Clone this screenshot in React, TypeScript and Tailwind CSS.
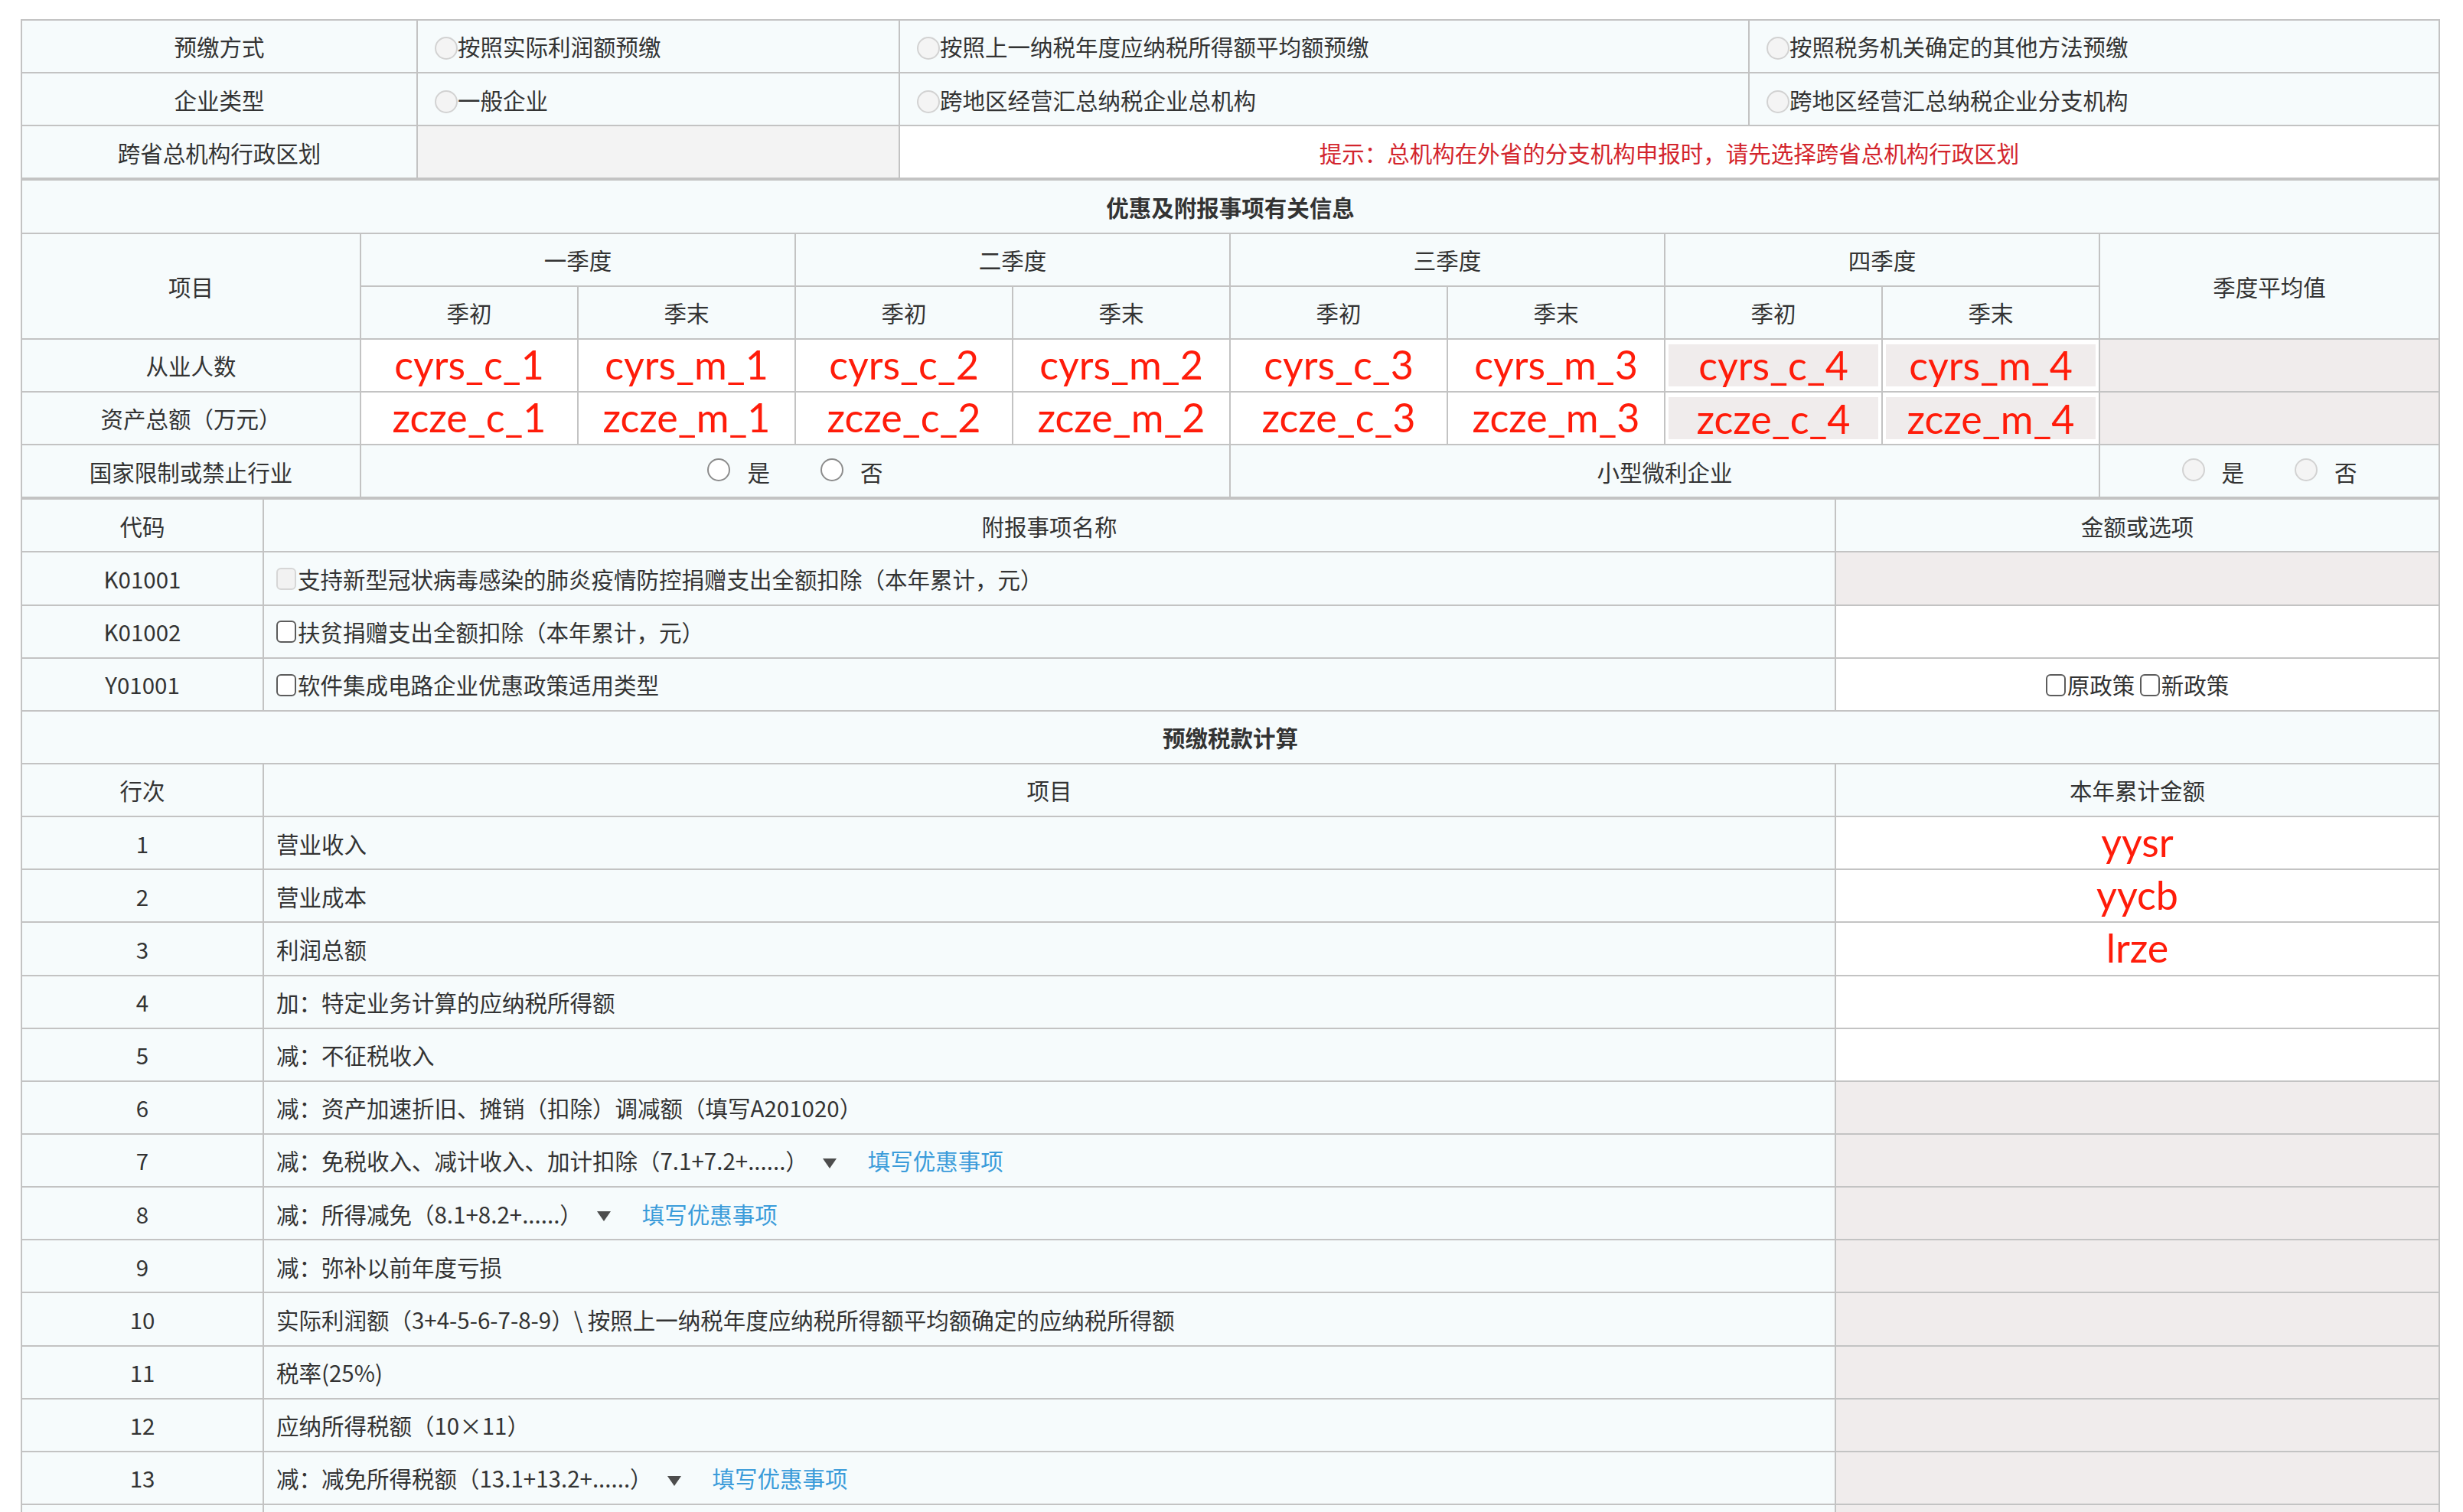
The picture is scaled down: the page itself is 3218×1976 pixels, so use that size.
import React from "react";

// shared cell styles
const base = "border-2 border-[#c3c3c3] h-[69.15px] p-0 text-[29.5px] font-['Noto_Sans_CJK_SC',sans-serif]";
const labelCell = `${base} bg-[#f6fbfc] text-center text-[#333]`;
const leftCell = `${base} bg-[#f6fbfc] text-left pl-[16px] text-[#333]`;
const whiteCell = `${base} bg-white text-center text-[#333]`;
const lockedCell = `${base} bg-[#f0ecec]`;
const valueText = "font-['Lato',sans-serif] text-[52px] text-[#ff1c0a] leading-none";

function Radio({ dark = false }: { dark?: boolean }) {
  return (
    <span
      className={`inline-block w-[30px] h-[30px] rounded-full border-2 align-middle -mt-[4px] ${
        dark ? "border-[#8c8c8c] bg-white" : "border-[#d2d2d2] bg-[#f4f4f4]"
      }`}
    />
  );
}

function Checkbox({ disabled = false }: { disabled?: boolean }) {
  return (
    <span
      className={`inline-block w-[26px] h-[29px] rounded-[6px] border-2 align-middle -mt-[8px] mr-[2px] ${
        disabled ? "border-[#d6d6d6] bg-[#f2f2f2]" : "border-[#5c5c5c] bg-white"
      }`}
    />
  );
}

function Caret() {
  return (
    <svg className="inline-block align-middle ml-[18px] -mt-[2px]" width="20" height="15" viewBox="0 0 20 15">
      <path d="M1 1h18L10 14z" fill="#4d4d4d" />
    </svg>
  );
}

function YesNo({ dark = false }: { dark?: boolean }) {
  return (
    <div className="flex items-center justify-center gap-[66px]">
      <span className="flex items-center gap-[22px]">
        <Radio dark={dark} />
        <span>是</span>
      </span>
      <span className="flex items-center gap-[22px]">
        <Radio dark={dark} />
        <span>否</span>
      </span>
    </div>
  );
}

const quarters = ["一季度", "二季度", "三季度", "四季度"];

const quarterCols = [1, 2, 3, 4];

const attachRows = [
  { code: "K01001", name: "支持新型冠状病毒感染的肺炎疫情防控捐赠支出全额扣除（本年累计，元）", disabled: true, locked: true },
  { code: "K01002", name: "扶贫捐赠支出全额扣除（本年累计，元）", disabled: false, locked: false },
  { code: "Y01001", name: "软件集成电路企业优惠政策适用类型", disabled: false, locked: false, policy: true },
];

type TaxRow = {
  n: number;
  text: string;
  value?: string;
  locked?: boolean;
  link?: boolean;
};

const taxRows: TaxRow[] = [
  { n: 1, text: "营业收入", value: "yysr" },
  { n: 2, text: "营业成本", value: "yycb" },
  { n: 3, text: "利润总额", value: "lrze" },
  { n: 4, text: "加：特定业务计算的应纳税所得额" },
  { n: 5, text: "减：不征税收入" },
  { n: 6, text: "减：资产加速折旧、摊销（扣除）调减额（填写A201020）", locked: true },
  { n: 7, text: "减：免税收入、减计收入、加计扣除（7.1+7.2+......）", locked: true, link: true },
  { n: 8, text: "减：所得减免（8.1+8.2+......）", locked: true, link: true },
  { n: 9, text: "减：弥补以前年度亏损", locked: true },
  { n: 10, text: "实际利润额（3+4-5-6-7-8-9）\\ 按照上一纳税年度应纳税所得额平均额确定的应纳税所得额", locked: true },
  { n: 11, text: "税率(25%)", locked: true },
  { n: 12, text: "应纳所得税额（10×11）", locked: true },
  { n: 13, text: "减：减免所得税额（13.1+13.2+......）", locked: true, link: true },
];

export default function App() {
  return (
    <div className="min-h-screen bg-white pl-[27px] pt-[25px] flex flex-col">
      {/* 预缴方式 / 企业类型 */}
      <table className="w-[3159px] table-fixed border-collapse border-2 border-[#c3c3c3]">
        <colgroup>
          <col className="w-[517px]" />
          <col className="w-[630px]" />
          <col className="w-[1110px]" />
          <col className="w-[902px]" />
        </colgroup>
        <tbody>
          <tr>
            <td className={labelCell}>预缴方式</td>
            <td className={`${leftCell} pl-[22px]`}>
              <Radio />按照实际利润额预缴
            </td>
            <td className={`${leftCell} pl-[22px]`}>
              <Radio />按照上一纳税年度应纳税所得额平均额预缴
            </td>
            <td className={`${leftCell} pl-[22px]`}>
              <Radio />按照税务机关确定的其他方法预缴
            </td>
          </tr>
          <tr>
            <td className={labelCell}>企业类型</td>
            <td className={`${leftCell} pl-[22px]`}>
              <Radio />一般企业
            </td>
            <td className={`${leftCell} pl-[22px]`}>
              <Radio />跨地区经营汇总纳税企业总机构
            </td>
            <td className={`${leftCell} pl-[22px]`}>
              <Radio />跨地区经营汇总纳税企业分支机构
            </td>
          </tr>
          <tr>
            <td className={labelCell}>跨省总机构行政区划</td>
            <td className={`${base} bg-[#f3f3f3]`} />
            <td colSpan={2} className={`${base} bg-white text-center text-[#d3252d]`}>
              提示：总机构在外省的分支机构申报时，请先选择跨省总机构行政区划
            </td>
          </tr>
        </tbody>
      </table>

      {/* 优惠及附报事项有关信息 */}
      <table className="w-[3159px] table-fixed border-collapse border-2 border-[#c3c3c3]">
        <colgroup>
          <col className="w-[443px]" />
          {[0, 1, 2, 3, 4, 5, 6, 7].map((i) => (
            <col key={i} className="w-[284px]" />
          ))}
          <col className="w-[444px]" />
        </colgroup>
        <tbody>
          <tr>
            <td colSpan={10} className={`${labelCell} font-bold`}>
              优惠及附报事项有关信息
            </td>
          </tr>
          <tr>
            <td rowSpan={2} className={labelCell}>项目</td>
            {quarters.map((q) => (
              <td key={q} colSpan={2} className={labelCell}>
                {q}
              </td>
            ))}
            <td rowSpan={2} className={labelCell}>季度平均值</td>
          </tr>
          <tr>
            {quarterCols.map((q) => (
              <React.Fragment key={q}>
                <td className={labelCell}>季初</td>
                <td className={labelCell}>季末</td>
              </React.Fragment>
            ))}
          </tr>
          {[
            { label: "从业人数", key: "cyrs" },
            { label: "资产总额（万元）", key: "zcze" },
          ].map((row) => (
            <tr key={row.key}>
              <td className={labelCell}>{row.label}</td>
              {quarterCols.map((q) =>
                ["c", "m"].map((p) =>
                  q === 4 ? (
                    <td key={`${q}${p}`} className={`${whiteCell} px-[4px] py-[6px]`}>
                      <div className="h-[55px] bg-[#f0ecec] flex items-center justify-center">
                        <span className={valueText}>{`${row.key}_${p}_${q}`}</span>
                      </div>
                    </td>
                  ) : (
                    <td key={`${q}${p}`} className={whiteCell}>
                      <span className={valueText}>{`${row.key}_${p}_${q}`}</span>
                    </td>
                  )
                )
              )}
              <td className={lockedCell} />
            </tr>
          ))}
          <tr>
            <td className={labelCell}>国家限制或禁止行业</td>
            <td colSpan={4} className={labelCell}>
              <YesNo dark />
            </td>
            <td colSpan={4} className={labelCell}>小型微利企业</td>
            <td className={labelCell}>
              <YesNo />
            </td>
          </tr>
        </tbody>
      </table>

      {/* 附报事项 + 预缴税款计算 */}
      <table className="w-[3159px] table-fixed border-collapse border-2 border-[#c3c3c3]">
        <colgroup>
          <col className="w-[316px]" />
          <col className="w-[2054px]" />
          <col className="w-[789px]" />
        </colgroup>
        <tbody>
          <tr>
            <td className={labelCell}>代码</td>
            <td className={labelCell}>附报事项名称</td>
            <td className={labelCell}>金额或选项</td>
          </tr>
          {attachRows.map((r) => (
            <tr key={r.code}>
              <td className={labelCell}>{r.code}</td>
              <td className={`${leftCell} pl-[14px]`}>
                <Checkbox disabled={r.disabled} />
                {r.name}
              </td>
              {r.locked ? (
                <td className={lockedCell} />
              ) : (
                <td className={whiteCell}>
                  {r.policy && (
                    <span>
                      <Checkbox />原政策 <Checkbox />新政策
                    </span>
                  )}
                </td>
              )}
            </tr>
          ))}
          <tr>
            <td colSpan={3} className={`${labelCell} font-bold`}>
              预缴税款计算
            </td>
          </tr>
          <tr>
            <td className={labelCell}>行次</td>
            <td className={labelCell}>项目</td>
            <td className={labelCell}>本年累计金额</td>
          </tr>
          {taxRows.map((r) => (
            <tr key={r.n}>
              <td className={labelCell}>{r.n}</td>
              <td className={leftCell}>
                {r.text}
                {r.link && (
                  <>
                    <Caret />
                    <span className="ml-[40px] text-[#3b9cda]">填写优惠事项</span>
                  </>
                )}
              </td>
              {r.locked ? (
                <td className={lockedCell} />
              ) : (
                <td className={whiteCell}>
                  {r.value && <span className={valueText}>{r.value}</span>}
                </td>
              )}
            </tr>
          ))}
          {/* next row continues below the fold */}
          <tr>
            <td className={labelCell} />
            <td className={leftCell} />
            <td className={lockedCell} />
          </tr>
        </tbody>
      </table>
    </div>
  );
}
